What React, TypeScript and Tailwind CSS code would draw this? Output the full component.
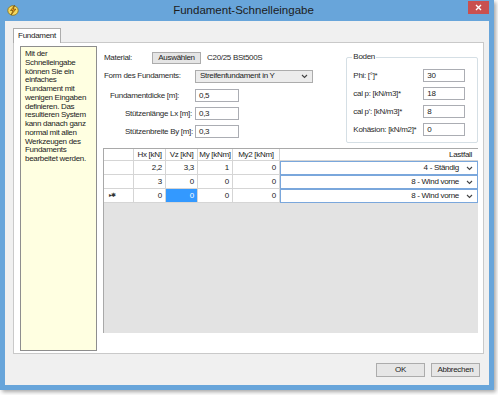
import React from "react";

const font = { fontFamily: '"Liberation Sans", Arial, sans-serif' };

function Input({ value, w }: { value: string; w: string }) {
  return (
    <div className={`${w} h-[13px] border border-[#abadb3] bg-white flex items-center pl-[3px] text-[8px] tracking-[-0.3px] text-[#222]`}>
      {value}
    </div>
  );
}

function Chevron() {
  return (
    <svg width="7" height="5" viewBox="0 0 7 5" className="shrink-0">
      <path d="M1 1 L3.5 3.5 L6 1" fill="none" stroke="#444" strokeWidth="1.1" />
    </svg>
  );
}

const rows = [
  { hx: "2,2", vz: "3,3", my: "1", my2: "0", lf: "4 - Ständig", mark: "" },
  { hx: "3", vz: "0", my: "0", my2: "0", lf: "8 - Wind vorne", mark: "" },
  { hx: "0", vz: "0", my: "0", my2: "0", lf: "8 - Wind vorne", mark: "▸✱" },
];

export default function App() {
  return (
    <div className="w-[498px] h-[395px] bg-white" style={font}>
      <div className="w-[494px] h-[390px] bg-[#68a5da] flex flex-col shadow-[2px_2px_4px_rgba(0,0,0,0.35)]">
        {/* Title bar */}
        <div className="h-[21px] flex items-start shrink-0">
          <div className="w-[12px] h-[12px] ml-[7px] mt-[4px]">
            <svg width="12" height="12" viewBox="0 0 12 12">
              <ellipse cx="6" cy="6.5" rx="5.2" ry="4.8" fill="#f6d860" stroke="#8a6d10" strokeWidth="0.8" />
              <path d="M7.5 1.5 L3.5 6.5 L6 6.5 L4.2 10.8 L8.8 5.2 L6.3 5.2 Z" fill="#f09a1a" stroke="#5a3d00" strokeWidth="0.6" />
            </svg>
          </div>
          <div className="flex-1 text-center text-[11.5px] text-[#1c1c1c] mt-[3px] leading-[14px]">
            Fundament-Schnelleingabe
          </div>
          <div className="w-[21px] h-[13px] mr-[5px] mt-[1px] bg-[#c9504f] flex items-center justify-center">
            <svg width="7" height="7" viewBox="0 0 7 7">
              <path d="M1 1 L6 6 M6 1 L1 6" stroke="white" strokeWidth="1.4" />
            </svg>
          </div>
        </div>
        {/* Client */}
        <div className="mx-[5px] mb-[5px] flex-1 bg-[#f0f0f0] flex flex-col text-[8px] tracking-[-0.3px] text-[#2a2a2a]">
          <div className="pl-[8px] pt-[7px]">
            <div className="relative z-10 w-[48px] h-[15px] -mb-px bg-white border border-b-0 border-[#adadad] flex items-center justify-center text-[#222]">
              Fundament
            </div>
            <div className="w-[471px] h-[312px] bg-white border border-[#c9c9c9] flex">
              {/* help box */}
              <div className="ml-[6px] mt-[3px] w-[77px] h-[305px] bg-[#ffffe1] border border-[#8e8e8e] pl-[4px] pt-[3px] leading-[8.75px] text-[#222]">
                Mit der<br />Schnelleingabe<br />können Sie ein<br />einfaches<br />Fundament mit<br />wenigen Eingaben<br />definieren. Das<br />resultieren System<br />kann danach ganz<br />normal mit allen<br />Werkzeugen des<br />Fundaments<br />bearbeitet werden.
              </div>
              {/* right column */}
              <div className="ml-[6px] w-[375px] flex flex-col">
                <div className="h-[105px] flex">
                  <div className="w-[244px] pt-[9px] flex flex-col">
                    <div className="h-[12px] flex items-center">
                      <div className="w-[49px] pl-[1px]">Material:</div>
                      <div className="w-[49px] h-[12px] border border-[#acacac] bg-[#e5e5e5] flex items-center justify-center text-[#222]">Auswählen</div>
                      <div className="ml-[6px]">C20/25 BSt500S</div>
                    </div>
                    <div className="mt-[6px] h-[12px] flex items-center">
                      <div className="w-[92px] pl-[1px]">Form des Fundaments:</div>
                      <div className="w-[118px] h-[13px] border border-[#acacac] bg-[#ececec] flex items-center pl-[4px] pr-[4px] justify-between text-[#222]">
                        <span>Streifenfundament in Y</span>
                        <Chevron />
                      </div>
                    </div>
                    <div className="mt-[7px] flex items-center">
                      <div className="w-[92px] pl-[7px]">Fundamentdicke [m]:</div>
                      <Input value="0,5" w="w-[44px]" />
                    </div>
                    <div className="mt-[5px] flex items-center">
                      <div className="w-[92px] pl-[22px]">Stützenlänge Lx [m]:</div>
                      <Input value="0,3" w="w-[44px]" />
                    </div>
                    <div className="mt-[5px] flex items-center">
                      <div className="w-[92px] pl-[22px]">Stützenbreite By [m]:</div>
                      <Input value="0,3" w="w-[44px]" />
                    </div>
                  </div>
                  {/* Boden */}
                  <div className="relative mt-[14px] w-[132px] h-[86px] border border-[#d5dfe5] rounded-[2px] pt-[11px] flex flex-col gap-[5px]">
                    <div className="absolute -top-[6px] left-[5px] bg-white px-[1px] leading-[10px]">Boden</div>
                    <div className="flex items-center">
                      <div className="w-[76px] pl-[6px]">Phi: [°]*</div>
                      <Input value="30" w="w-[42px]" />
                    </div>
                    <div className="flex items-center">
                      <div className="w-[76px] pl-[6px]">cal p: [kN/m3]*</div>
                      <Input value="18" w="w-[42px]" />
                    </div>
                    <div className="flex items-center">
                      <div className="w-[76px] pl-[6px]">cal p': [kN/m3]*</div>
                      <Input value="8" w="w-[42px]" />
                    </div>
                    <div className="flex items-center">
                      <div className="w-[76px] pl-[6px]">Kohäsion: [kN/m2]*</div>
                      <Input value="0" w="w-[42px]" />
                    </div>
                  </div>
                </div>
                {/* Grid */}
                <div className="h-[185px] bg-[#e3e3e3] border-l border-[#a9a9a9] text-[#222]">
                  <div className="flex h-[13px] bg-white border-t border-[#a9a9a9]">
                    <div className="w-[30px] border-r border-b border-[#d5d5d5]" />
                    <div className="w-[32px] border-r border-b border-[#d5d5d5] flex items-center justify-center">Hx [kN]</div>
                    <div className="w-[32px] border-r border-b border-[#d5d5d5] flex items-center justify-center">Vz [kN]</div>
                    <div className="w-[35px] border-r border-b border-[#d5d5d5] flex items-center justify-center">My [kNm]</div>
                    <div className="w-[47px] border-r border-b border-[#d5d5d5] flex items-center justify-center">My2 [kNm]</div>
                    <div className="w-[198px] border-b border-[#d5d5d5] flex items-center justify-end pr-[6px]">Lastfall</div>
                  </div>
                  {rows.map((r, i) => (
                    <div key={i} className="flex h-[14px] bg-white">
                      <div className="w-[30px] border-r border-b border-[#d5d5d5] flex items-center pl-[5px] text-[6px] tracking-[-1px] text-[#333]">{r.mark}</div>
                      <div className="w-[32px] border-r border-b border-[#d5d5d5] flex items-center justify-end pr-[3px]">{r.hx}</div>
                      <div className={`w-[32px] border-r border-b border-[#d5d5d5] flex items-center justify-end pr-[3px] ${i === 2 ? "bg-[#3399ff] text-white" : ""}`}>{r.vz}</div>
                      <div className="w-[35px] border-r border-b border-[#d5d5d5] flex items-center justify-end pr-[3px]">{r.my}</div>
                      <div className="w-[47px] border-r border-b border-[#d5d5d5] flex items-center justify-end pr-[3px]">{r.my2}</div>
                      <div className="w-[198px] border border-[#7aa7dc] flex items-center justify-end pr-[4px] gap-[7px]">
                        <span>{r.lf}</span>
                        <Chevron />
                      </div>
                    </div>
                  ))}
                </div>
              </div>
            </div>
          </div>
          <div className="mt-[9px] flex justify-end pr-[9px] gap-[6px]">
            <div className="w-[49px] h-[14px] border border-[#acacac] bg-[#e6e6e6] flex items-center justify-center text-[#222]">OK</div>
            <div className="w-[49px] h-[14px] border border-[#acacac] bg-[#e6e6e6] flex items-center justify-center text-[#222]">Abbrechen</div>
          </div>
        </div>
      </div>
    </div>
  );
}
